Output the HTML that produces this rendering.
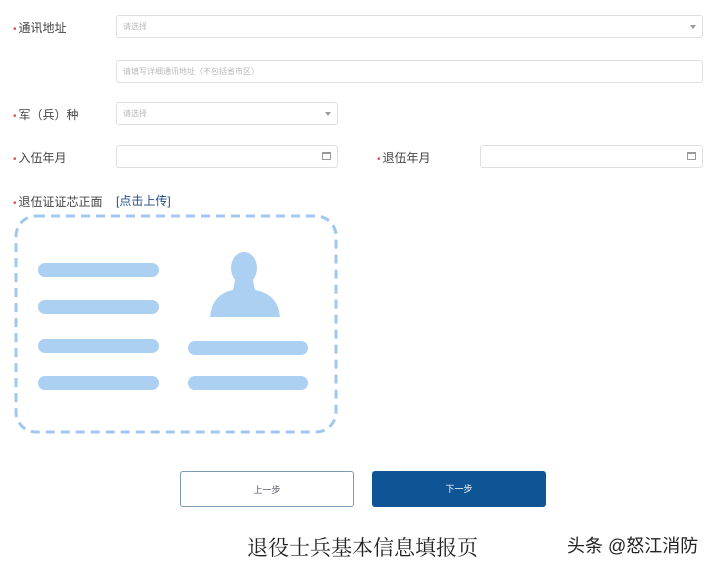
<!DOCTYPE html>
<html><head><meta charset="utf-8"><style>
*{margin:0;padding:0;box-sizing:border-box}
body{width:716px;height:569px;background:#fff;font-family:"Liberation Sans","Noto Sans CJK SC",sans-serif;position:relative;overflow:hidden;color:#333}
.l{position:absolute;font-size:12px;color:#444;left:13px}
.l b{color:#d9534f;font-weight:normal;font-size:10px;margin-right:2px}
.f{position:absolute;border:1px solid #dcdfe4;border-radius:3px;background:#fff;font-size:8px;color:#b8b8b8;padding-left:6px;line-height:21px}
.arr{position:absolute;right:6px;top:9px;width:0;height:0;border-left:3.5px solid transparent;border-right:3.5px solid transparent;border-top:4px solid #999}
.cal{position:absolute;right:6px;top:6px;width:9px;height:8px;border:1px solid #999;border-top-width:2px}
.bar{position:absolute;height:14px;border-radius:7px;background:#acd0f2}
.btn{position:absolute;top:471px;width:174px;height:36px;border-radius:3px;font-size:9px;text-align:center;line-height:36px}
</style></head><body>
<div class="l" style="top:19px"><b>•</b>通讯地址</div>
<div class="f" style="left:116px;top:15px;width:587px;height:23px">请选择<span class="arr"></span></div>
<div class="f" style="left:116px;top:60px;width:587px;height:23px">请填写详细通讯地址（不包括省市区）</div>
<div class="l" style="top:106px"><b>•</b>军（兵）种</div>
<div class="f" style="left:116px;top:102px;width:222px;height:23px">请选择<span class="arr"></span></div>
<div class="l" style="top:149px"><b>•</b>入伍年月</div>
<div class="f" style="left:116px;top:145px;width:222px;height:23px"><span class="cal"></span></div>
<div class="l" style="top:149px;left:377px"><b>•</b>退伍年月</div>
<div class="f" style="left:480px;top:145px;width:223px;height:23px"><span class="cal"></span></div>
<div class="l" style="top:193px"><b>•</b>退伍证证芯正面</div>
<div class="l" style="top:192px;left:116px;color:#1f4e8c">[点击上传]</div>
<svg style="position:absolute;left:0;top:0" width="716" height="569">
<rect x="16" y="216" width="320" height="216" rx="20" fill="none" stroke="#9fc8ee" stroke-width="3" stroke-dasharray="9 6"/>
<ellipse cx="244" cy="268" rx="13" ry="16" fill="#acd0f2"/>
<path d="M235 280 L253 280 L255 290 Q278 294 280 317 L210 317 Q212 294 233 290 Z" fill="#acd0f2"/>
</svg>
<div class="bar" style="left:38px;top:263px;width:121px"></div>
<div class="bar" style="left:38px;top:300px;width:121px"></div>
<div class="bar" style="left:38px;top:339px;width:121px"></div>
<div class="bar" style="left:38px;top:376px;width:121px"></div>
<div class="bar" style="left:188px;top:341px;width:120px"></div>
<div class="bar" style="left:188px;top:376px;width:120px"></div>
<div class="btn" style="left:180px;border:1px solid #7a9ab5;color:#556">上一步</div>
<div class="btn" style="left:372px;background:#0f5494;color:#fff">下一步</div>
<div style="position:absolute;left:247px;top:532px;font-size:21px;color:#222;font-family:'Noto Serif CJK SC',serif">退役士兵基本信息填报页</div>
<div style="position:absolute;left:567px;top:532px;font-size:18px;color:#222">头条 @怒江消防</div>
</body></html>
